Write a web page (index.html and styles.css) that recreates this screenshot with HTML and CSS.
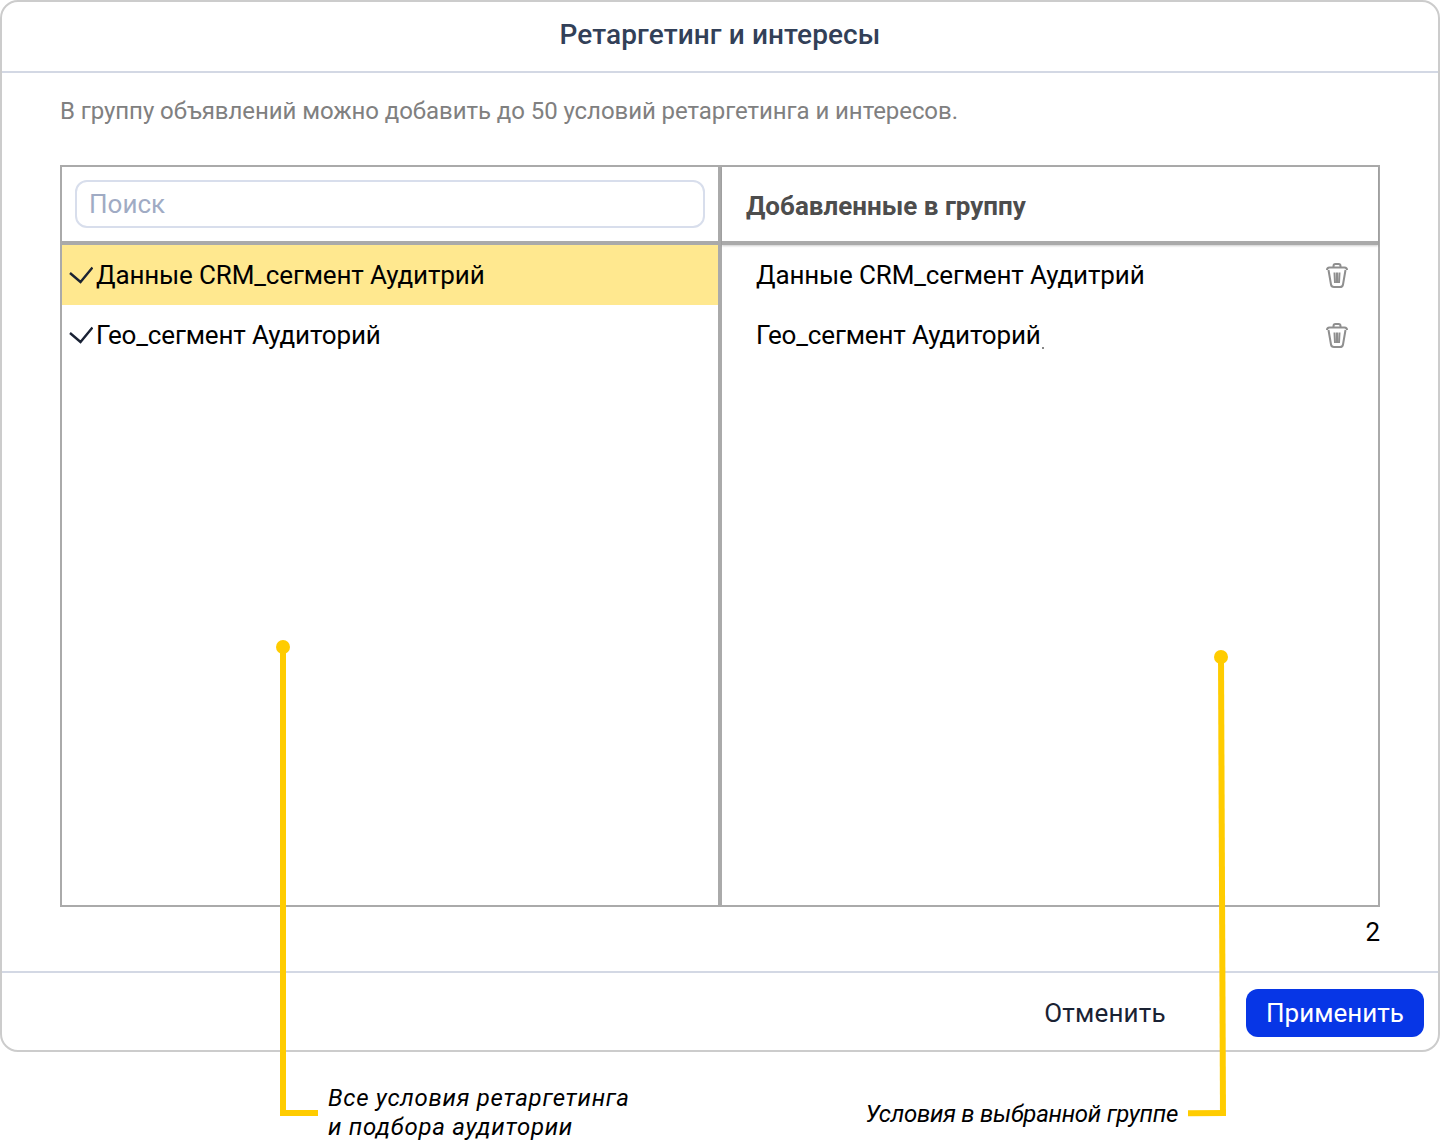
FILE: index.html
```html
<!DOCTYPE html>
<html lang="ru">
<head>
    <meta charset="UTF-8">
    <title>Ретаргетинг и интересы</title>
    <link rel="stylesheet" href="styles.css">
</head>
<body>
    <div class="page">
        <div class="dialog">
            <div class="dialog-head">Ретаргетинг и интересы</div>

            <div class="dialog-body">
                <p class="hint">В группу объявлений можно добавить до 50 условий ретаргетинга и интересов.</p>

                <div class="picker">
                    <div class="col col-left">
                        <div class="col-head search-head">
                            <input class="search" type="text" placeholder="Поиск">
                        </div>
                        <ul class="list">
                            <li class="row row-active">
                                <svg class="check" viewBox="0 0 24 18"><path d="M1 7 L11.5 16 L23.5 1.5"/></svg>
                                <span>Данные CRM_сегмент Аудитрий</span>
                            </li>
                            <li class="row">
                                <svg class="check" viewBox="0 0 24 18"><path d="M1 7 L11.5 16 L23.5 1.5"/></svg>
                                <span>Гео_сегмент Аудиторий</span>
                            </li>
                        </ul>
                    </div>
                    <div class="col col-right">
                        <div class="col-head title-head">Добавленные в группу</div>
                        <ul class="list">
                            <li class="row added">
                                <span>Данные CRM_сегмент Аудитрий</span>
                                <svg class="trash" viewBox="0 0 22 25"><path d="M1 7q0-2.500 2.500-2.500h15q2.500 0 2.500 2.500M7.500 4.500V3q0-2 2-2h3q2 0 2 2v1.500M2.500 7l2.500 14.500q.4 2.500 3 2.500h6q2.600 0 3-2.500L19.500 7M8.500 9.500l.5 10.500M11 9.500v10.500M13.500 9.500l-.5 10.500"/></svg>
                            </li>
                            <li class="row added">
                                <span class="caret-mark">Гео_сегмент Аудиторий</span>
                                <svg class="trash" viewBox="0 0 22 25"><path d="M1 7q0-2.500 2.500-2.500h15q2.500 0 2.500 2.500M7.500 4.500V3q0-2 2-2h3q2 0 2 2v1.500M2.500 7l2.500 14.500q.4 2.500 3 2.500h6q2.600 0 3-2.500L19.500 7M8.500 9.500l.5 10.500M11 9.500v10.500M13.500 9.500l-.5 10.500"/></svg>
                            </li>
                        </ul>
                    </div>
                </div>

                <div class="count">2</div>
            </div>

            <div class="dialog-foot">
                <button class="btn btn-cancel">Отменить</button>
                <button class="btn btn-apply">Применить</button>
            </div>
        </div>

        <!-- annotations over the dialog -->
        <div class="callout callout-left"></div>
        <p class="note note-left">Все условия ретаргетинга<br>и подбора аудитории</p>
        <div class="callout callout-right"></div>
        <p class="note note-right">Условия в выбранной группе</p>
    </div>
</body>
</html>
```

FILE: styles.css
```css
* {
    margin: 0;
    padding: 0;
    box-sizing: border-box;
}

body {
    background: #fff;
    font-family: Roboto, sans-serif;
    color: #000;
}

.page {
    position: relative;
    width: 1440px;
    height: 1142px;
    overflow: hidden;
}

.dialog {
    height: 1052px;
    display: flex;
    flex-direction: column;
    background: #fff;
    border: 2px solid #ccc;
    border-radius: 18px;
}

.dialog-head {
    height: 71px;
    flex-shrink: 0;
    padding-bottom: 4px;
    display: flex;
    align-items: center;
    justify-content: center;
    border-bottom: 2px solid #d3d8e4;
    font-size: 28px;
    font-weight: 500;
    letter-spacing: 0.1px;
    color: #324058;
}

.dialog-body {
    flex: 1;
    padding: 0 58px;
}

.hint {
    height: 92px;
    padding-top: 21px;
    font-size: 24px;
    line-height: 34px;
    letter-spacing: -0.07px;
    color: #808080;
}

.picker {
    display: flex;
    height: 742px;
    border: 2px solid #aaa;
}

.col {
    display: flex;
    flex-direction: column;
}

.col-left {
    width: 656px;
}

.col-right {
    flex: 1;
    border-left: 4px solid #aaa;
}

.col-head {
    height: 78px;
    flex-shrink: 0;
    border-bottom: 4px solid #aaa;
}

.search-head {
    padding: 13px 13px 0;
}

.search {
    display: block;
    width: 630px;
    height: 48px;
    padding: 0 12px;
    border: 2px solid #d8deec;
    border-radius: 12px;
    outline: none;
    font-family: inherit;
    font-size: 26px;
}

.search::placeholder {
    color: #a0abc4;
    opacity: 1;
}

.title-head {
    display: flex;
    align-items: center;
    padding: 4px 0 0 24px;
    box-shadow: 0 1px 2px rgba(0, 0, 0, 0.2);
    font-size: 26px;
    font-weight: 700;
    color: #4d4d4d;
}

.list {
    list-style: none;
}

.row {
    height: 60px;
    display: flex;
    align-items: center;
    padding-left: 7px;
    font-size: 26px;
    letter-spacing: -0.15px;
}

.row-active {
    background: #ffe88f;
}

.added {
    justify-content: space-between;
    padding: 0 30px 0 34px;
}

.caret-mark {
    position: relative;
}

.caret-mark::after {
    content: "";
    position: absolute;
    right: -3px;
    bottom: 1px;
    width: 2px;
    height: 2px;
    background: #888;
}

.check {
    width: 24px;
    height: 18px;
    margin-right: 3px;
    fill: none;
    stroke: #1a2233;
    stroke-width: 2.4;
}

.trash {
    width: 22px;
    height: 25px;
    fill: none;
    stroke: #8f8f8f;
    stroke-width: 2;
}

.count {
    height: 64px;
    padding-top: 8px;
    text-align: right;
    font-size: 26px;
    line-height: 34px;
}

.dialog-foot {
    height: 79px;
    flex-shrink: 0;
    display: flex;
    align-items: flex-start;
    justify-content: flex-end;
    gap: 61px;
    padding: 16px 14px 0 0;
    border-top: 2px solid #d3d8e4;
}

.btn {
    height: 48px;
    border: none;
    border-radius: 12px;
    background: none;
    font-family: inherit;
    font-size: 26px;
}

.btn-cancel {
    width: 160px;
    letter-spacing: 0.2px;
    color: #1a2233;
}

.btn-apply {
    width: 178px;
    background: #0736e6;
    color: #fff;
}

.callout {
    position: absolute;
    width: 6px;
    background: #fc0;
}

.callout::before {
    content: "";
    position: absolute;
    top: -7px;
    left: -4px;
    width: 14px;
    height: 14px;
    border-radius: 50%;
    background: #fc0;
}

.callout::after {
    content: "";
    position: absolute;
    bottom: 0;
    height: 6px;
    background: #fc0;
}

.callout-left {
    left: 280px;
    top: 647px;
    height: 469px;
}

.callout-left::after {
    left: 0;
    width: 38px;
}

/* this line leans about 2px in the original */
.callout-right {
    left: 1220px;
    top: 657px;
    height: 459px;
    transform: rotate(-0.25deg);
    transform-origin: bottom;
}

.callout-right::after {
    right: 0;
    width: 38px;
}

.note {
    position: absolute;
    font-size: 24px;
    line-height: 29px;
    font-style: italic;
    color: #000;
}

.note-left {
    left: 328px;
    top: 1084px;
    letter-spacing: 0.72px;
}

.note-right {
    right: 262px;
    top: 1100px;
    letter-spacing: -0.27px;
}
```
